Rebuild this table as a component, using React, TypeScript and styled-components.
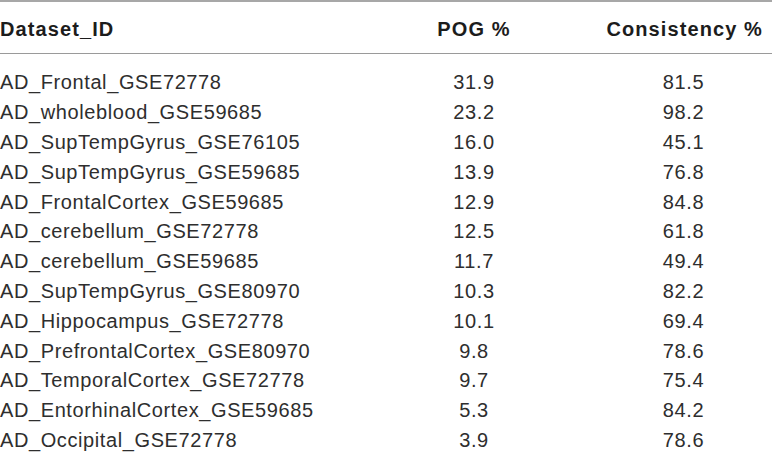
import styled, { createGlobalStyle } from "styled-components";

const GlobalStyle = createGlobalStyle`
    body {
        margin: 0;
        background: #ffffff;
        font-family: "Liberation Sans", Arial, sans-serif;
    }
`;

const TableWrap = styled.div`
    width: 772px;
    height: 454px;
    overflow: hidden;
    border-top: 2px solid #a7a7a7;
    box-sizing: border-box;
    color: #2b2b2b;
`;

const Row = styled.div<{ $head?: boolean }>`
    display: grid;
    grid-template-columns: 1fr 148px 168px;
    column-gap: 56px;
    align-items: center;
    height: ${props => (props.$head ? "47px" : "29.8px")};
    padding-top: ${props => (props.$head ? "4px" : "0")};
    font-size: 20px;
    font-weight: ${props => (props.$head ? 700 : 400)};
    letter-spacing: ${props => (props.$head ? "1.1px" : "0.6px")};
    color: ${props => (props.$head ? "#1c1c1c" : "#2e2e2e")};
    border-bottom: ${props => (props.$head ? "1px solid #9a9a9a" : "none")};
`;

const Body = styled.div`
    padding-top: 14px;
`;

const Cell = styled.span<{ $align?: "left" | "center" | "right" }>`
    text-align: ${props => props.$align || "left"};
    white-space: nowrap;

    &.last {
        padding-right: 9px;
    }
`;

const rows: [string, string, string][] = [
    ["AD_Frontal_GSE72778", "31.9", "81.5"],
    ["AD_wholeblood_GSE59685", "23.2", "98.2"],
    ["AD_SupTempGyrus_GSE76105", "16.0", "45.1"],
    ["AD_SupTempGyrus_GSE59685", "13.9", "76.8"],
    ["AD_FrontalCortex_GSE59685", "12.9", "84.8"],
    ["AD_cerebellum_GSE72778", "12.5", "61.8"],
    ["AD_cerebellum_GSE59685", "11.7", "49.4"],
    ["AD_SupTempGyrus_GSE80970", "10.3", "82.2"],
    ["AD_Hippocampus_GSE72778", "10.1", "69.4"],
    ["AD_PrefrontalCortex_GSE80970", "9.8", "78.6"],
    ["AD_TemporalCortex_GSE72778", "9.7", "75.4"],
    ["AD_EntorhinalCortex_GSE59685", "5.3", "84.2"],
    ["AD_Occipital_GSE72778", "3.9", "78.6"],
];

const App: React.FC = () => {
    return (
        <>
            <GlobalStyle />
            <TableWrap>
                <Row $head>
                    <Cell>Dataset_ID</Cell>
                    <Cell $align="center">POG %</Cell>
                    <Cell $align="right" className="last">Consistency %</Cell>
                </Row>
                <Body>
                    {rows.map(([id, pog, cons]) => (
                        <Row key={id}>
                            <Cell>{id}</Cell>
                            <Cell $align="center">{pog}</Cell>
                            <Cell $align="center" className="last">{cons}</Cell>
                        </Row>
                    ))}
                </Body>
            </TableWrap>
        </>
    );
};

export default App;
